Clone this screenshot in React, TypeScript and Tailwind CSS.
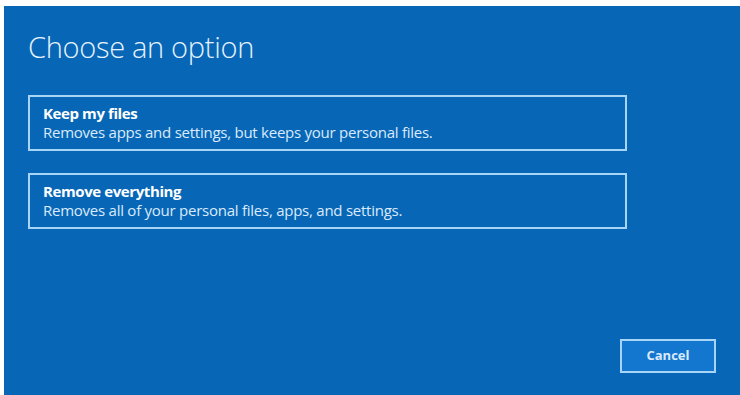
import React from "react";

function Option({ title, desc }: { title: string; desc: string }) {
  return (
    <div className="w-[599px] h-[56px] border-2 border-[#a8d4f7] pl-[13px] pt-[7px] flex flex-col text-white">
      <div className="text-[15px] leading-[19px] font-bold tracking-[-0.4px]">{title}</div>
      <div className="text-[15px] leading-[19px] text-[#dbeafc] tracking-[-0.25px]">{desc}</div>
    </div>
  );
}

export default function App() {
  return (
    <div className="w-[740px] h-[395px] bg-white pl-[4px] pt-[6px]" style={{ fontFamily: '"Open Sans", "Noto Sans", sans-serif' }}>
      <div className="w-full h-full bg-[#0767b6] flex flex-col pl-[24px]">
        <div className="pt-[22px] text-[29px] leading-[38px] font-light text-[#e6f2fd] tracking-[-0.3px]">Choose an option</div>
        <div className="mt-[29px] flex flex-col gap-[22px]">
          <Option title="Keep my files" desc="Removes apps and settings, but keeps your personal files." />
          <Option title="Remove everything" desc="Removes all of your personal files, apps, and settings." />
        </div>
        <div className="flex-1" />
        <div className="flex justify-end pr-[24px] pb-[22px]">
          <div className="w-[96px] h-[34px] border-2 border-[#a8d4f7] bg-[#1377d0] flex items-center justify-center text-[13px] font-bold text-[#dbeafc]">Cancel</div>
        </div>
      </div>
    </div>
  );
}
